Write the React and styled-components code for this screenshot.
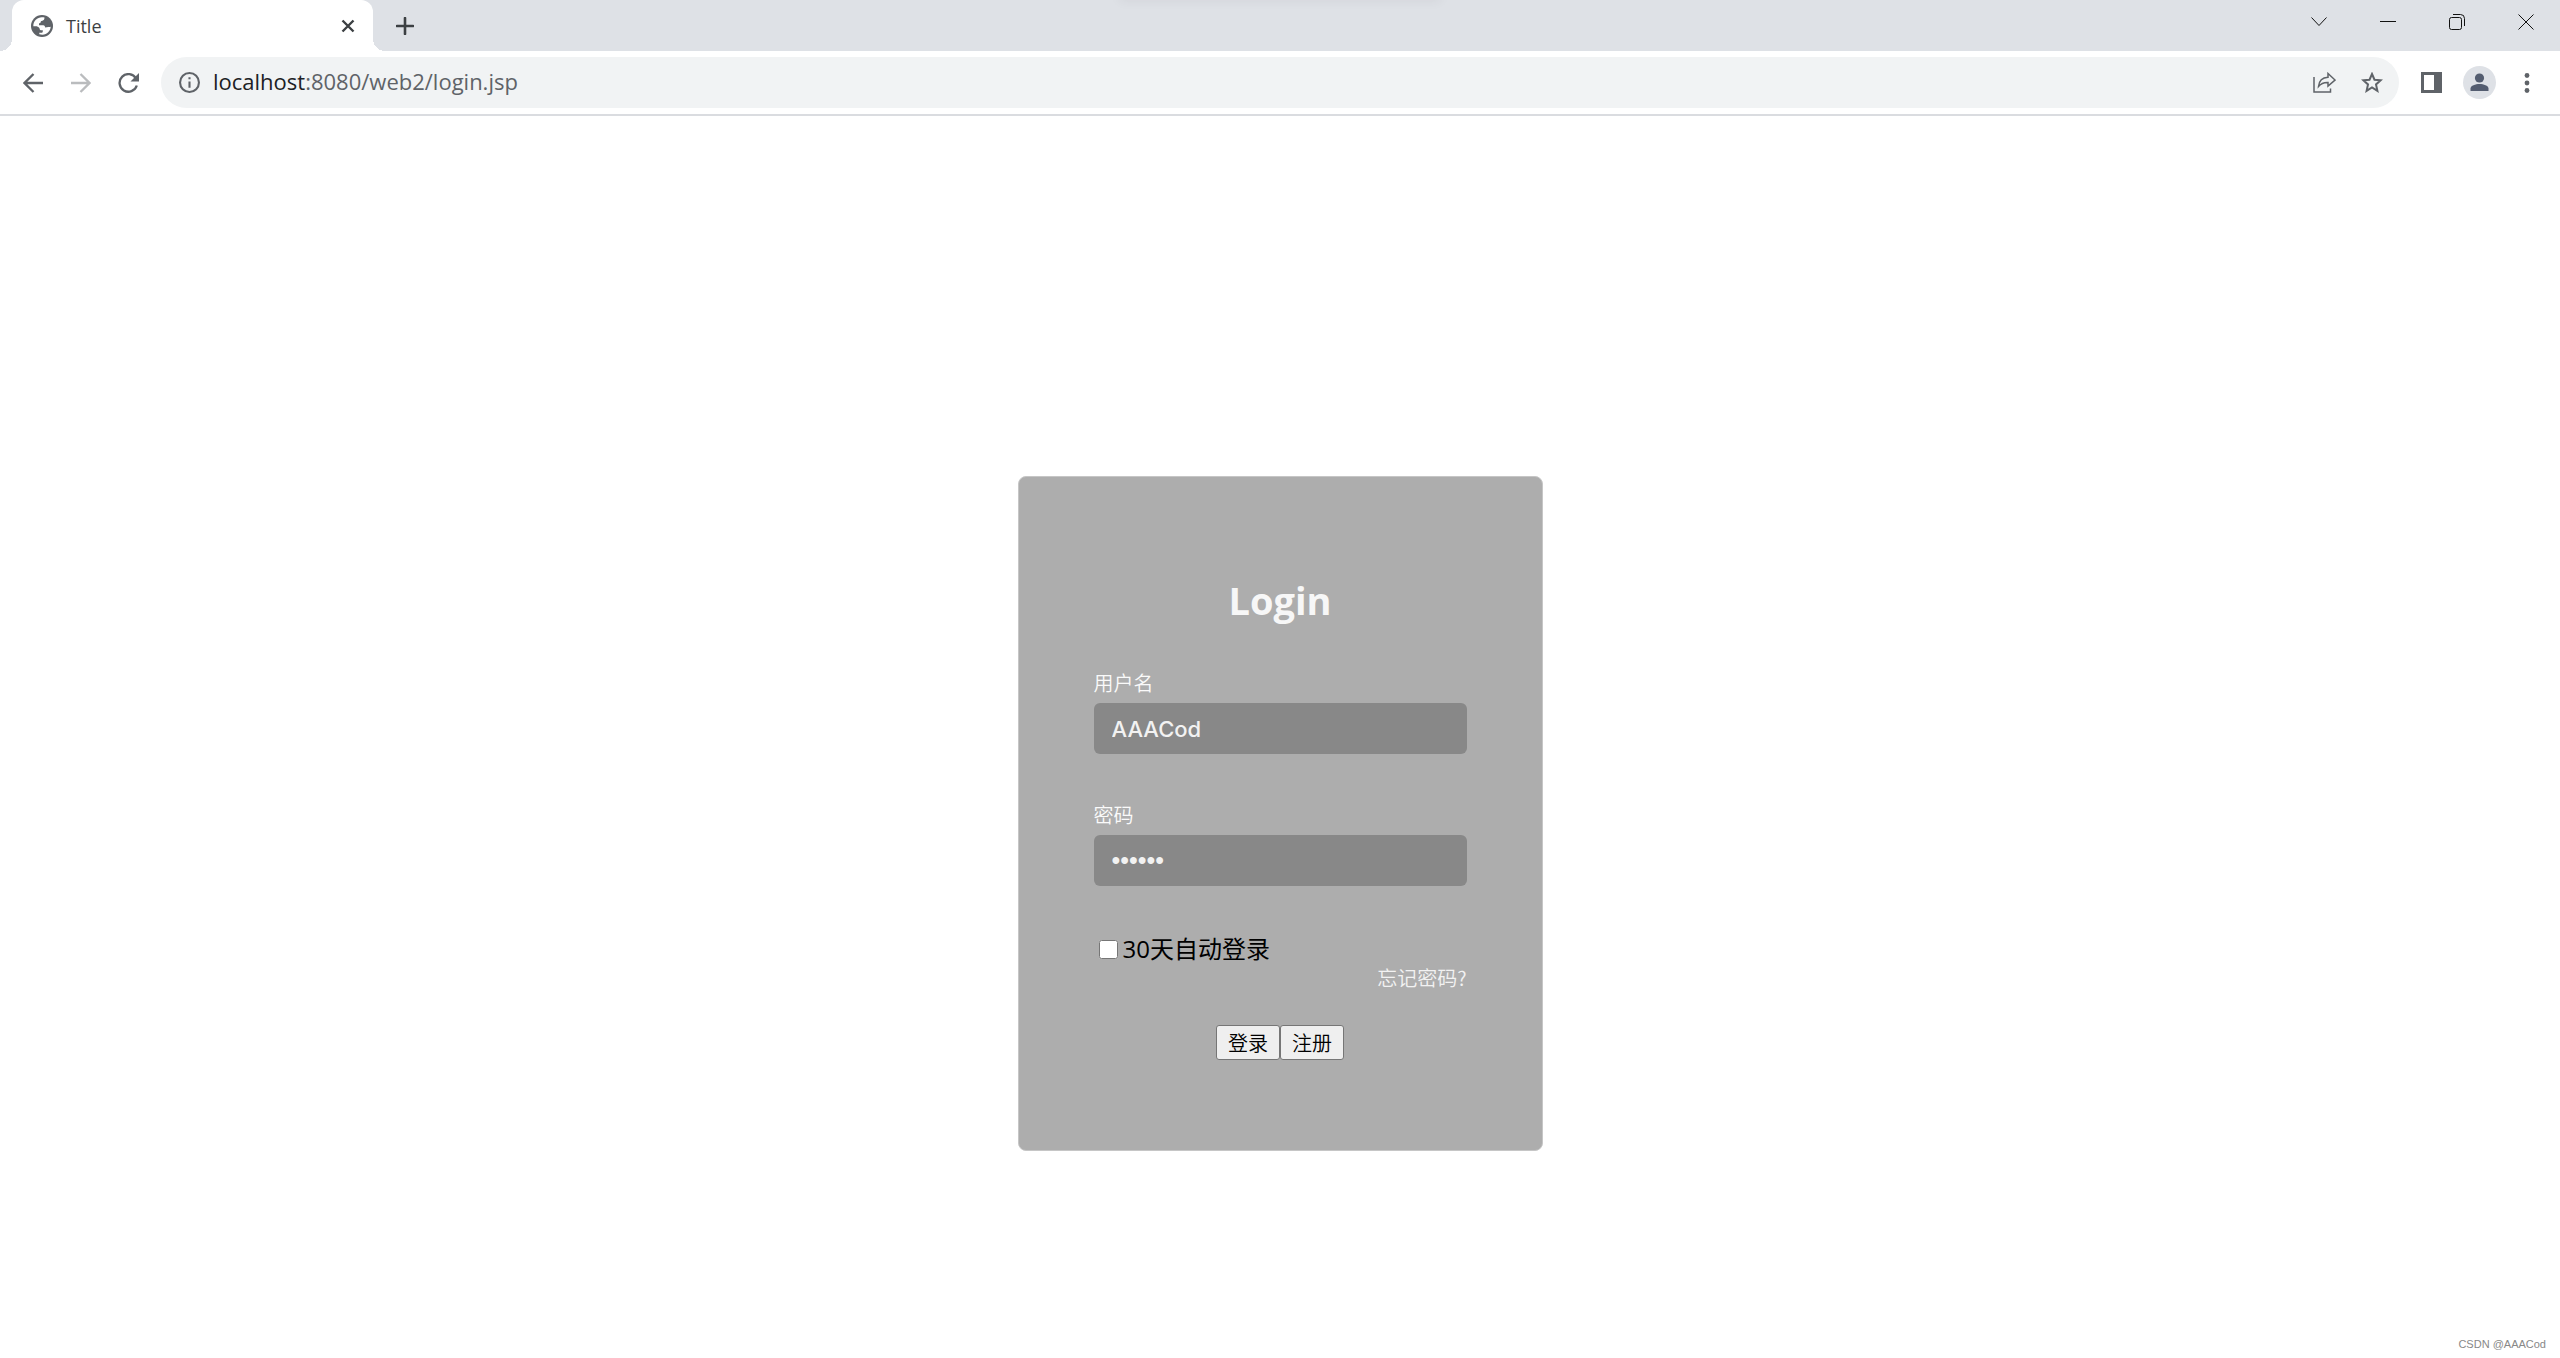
import { useState } from "react";
import styled, { createGlobalStyle } from "styled-components";

const App = () => {
  const [username, setUsername] = useState("AAACod");
  const [password, setPassword] = useState("123456");
  const [remember, setRemember] = useState(false);

  return (
    <Browser>
      <GlobalStyle />
      <TabStrip>
        <Tab>
          <svg width="22" height="22" viewBox="0 0 22 22">
            <circle cx="11" cy="11" r="11" fill="#5f6368" />
            <path
              d="M13.500 2.600C13.500 4.500 12.800 5.600 11.400 5.700C9.900 5.800 9.600 6.600 9.700 7.600L8 8.400V10.200H12.200C13.700 10.300 14 11.300 14.200 12.600C16.500 12.300 18.600 12 19.700 11.800C19.500 16 16 19.600 11.500 19.700C10.300 19.700 9.200 19.500 8.300 19.200V17.800H10.500C11.500 17.800 11.800 17 11.800 16V15.200H9.800C8.800 15 8.700 14.200 8.400 13C7.500 11.700 6.200 11.200 4.600 11.200H2.300C2.200 6 6.500 2.200 11 2.300C12 2.300 12.800 2.400 13.500 2.600Z"
              fill="#fff"
            />
          </svg>
          <TabTitle>Title</TabTitle>
          <IconButton aria-label="Close tab" $size={24}>
            <svg width="14" height="14" viewBox="0 0 14 14" fill="none" stroke="#3c4043" strokeWidth="2.400">
              <path d="M1.500 1.500L12.500 12.500M12.500 1.500L1.500 12.500" />
            </svg>
          </IconButton>
        </Tab>
        <IconButton aria-label="New tab" $size={36}>
          <svg width="18" height="18" viewBox="0 0 18 18" fill="none" stroke="#3c4043" strokeWidth="2.600" strokeLinecap="round">
            <path d="M9 1V17M1 9H17" />
          </svg>
        </IconButton>
        <TopShadow />
        <WindowButtons>
          <IconButton aria-label="Search tabs" $size={69}>
            <svg width="16" height="10" viewBox="0 0 16 10" fill="none" stroke="#111">
              <path d="M.5.5L8 8.500L15.500.5" />
            </svg>
          </IconButton>
          <IconButton aria-label="Minimize" $size={69}>
            <svg width="16" height="2" viewBox="0 0 16 2" fill="none" stroke="#111">
              <path d="M0 .5H16" />
            </svg>
          </IconButton>
          <IconButton aria-label="Restore" $size={69}>
            <svg width="16" height="16" viewBox="0 0 16 16" fill="none" stroke="#111">
              <rect x=".5" y="3.500" width="12" height="12" rx="2" />
              <path d="M4 .5H11.500Q15.500.5 15.500 4.500V12" />
            </svg>
          </IconButton>
          <IconButton aria-label="Close" $size={69}>
            <svg width="16" height="16" viewBox="0 0 16 16" fill="none" stroke="#111">
              <path d="M.5.5L15.500 15.500M15.500.5L.5 15.500" />
            </svg>
          </IconButton>
        </WindowButtons>
      </TabStrip>

      <Toolbar>
        <IconButton aria-label="Back" $size={48}>
          <svg width="20" height="20" viewBox="0 0 20 20" fill="none" stroke="#5f6368" strokeWidth="2.300">
            <path d="M20 10H1.500M10.500 1L1.500 10L10.500 19" />
          </svg>
        </IconButton>
        <IconButton aria-label="Forward" $size={48}>
          <svg width="20" height="20" viewBox="0 0 20 20" fill="none" stroke="#babcbe" strokeWidth="2.300">
            <path d="M0 10H18.500M9.500 1L18.500 10L9.500 19" />
          </svg>
        </IconButton>
        <IconButton aria-label="Reload" $size={48}>
          <svg width="22" height="20" viewBox="0 0 22 20" fill="none">
            <path d="M18 5.500A8.800 8.800 0 1 0 18.800 12.500" stroke="#5f6368" strokeWidth="2.300" />
            <path d="M21 0V8.500H12.500Z" fill="#5f6368" />
          </svg>
        </IconButton>
        <AddressBar>
          <svg width="21" height="21" viewBox="0 0 20 20" fill="none" stroke="#5f6368" strokeWidth="2">
            <circle cx="10" cy="10" r="9" />
            <path d="M10 9V15M10 5V7" />
          </svg>
          <Address>
            <strong>localhost</strong>:8080/web2/login.jsp
          </Address>
          <IconButton aria-label="Share this page" $size={48}>
            <svg width="23" height="21" viewBox="0 0 23 21" fill="none" stroke="#5f6368" strokeWidth="1.500">
              <path d="M1 5V20H17.500V16.500" />
              <path d="M5.500 14.500C6 9 9 5.500 15 5.200V1.500L22 8L15 14V10.500C11 10.300 8 11.500 5.500 14.500Z" />
            </svg>
          </IconButton>
          <IconButton aria-label="Bookmark this page" $size={48}>
            <svg width="22" height="21" viewBox="0 0 22 21" fill="none" stroke="#5f6368" strokeWidth="2">
              <path d="M11 2L13.500 7.700L19.700 8.300L15 12.400L16.400 18.900L11 15.500L5.600 18.900L7 12.400L2.300 8.300L8.500 7.700Z" />
            </svg>
          </IconButton>
        </AddressBar>
        <IconButton aria-label="Side panel" $size={48}>
          <svg width="21" height="21" viewBox="0 0 21 21">
            <path d="M0 0H21V21H0ZM3 3V18H13V3Z" fill="#5f6368" fillRule="evenodd" />
          </svg>
        </IconButton>
        <IconButton aria-label="Profile" $size={48}>
          <svg width="33" height="33" viewBox="0 0 33 33">
            <circle cx="16.500" cy="16.500" r="16.500" fill="#dee1e6" />
            <circle cx="16.500" cy="12" r="4.600" fill="#545d70" />
            <path d="M7.500 25V22.500C7.500 19.500 12.500 18 16.500 18S25.500 19.500 25.500 22.500V25Z" fill="#545d70" />
          </svg>
        </IconButton>
        <IconButton aria-label="Menu" $size={48}>
          <svg width="6" height="20" viewBox="0 0 6 20" fill="#5f6368">
            <circle cx="3" cy="2.500" r="2.400" />
            <circle cx="3" cy="10" r="2.400" />
            <circle cx="3" cy="17.500" r="2.400" />
          </svg>
        </IconButton>
      </Toolbar>

      <Page>
        <LoginForm onSubmit={(ev) => ev.preventDefault()}>
          <Heading>Login</Heading>
          <Field>
            <FieldLabel htmlFor="username">用户名</FieldLabel>
            <TextInput
              id="username"
              type="text"
              value={username}
              onChange={(ev) => setUsername(ev.target.value)}
            />
          </Field>
          <Field>
            <FieldLabel htmlFor="password">密码</FieldLabel>
            <PasswordInput
              id="password"
              type="password"
              value={password}
              onChange={(ev) => setPassword(ev.target.value)}
            />
          </Field>
          <Remember>
            <Checkbox
              type="checkbox"
              checked={remember}
              onChange={(ev) => setRemember(ev.target.checked)}
            />
            30天自动登录
          </Remember>
          <ForgotLink href="#forgot">忘记密码?</ForgotLink>
          <Actions>
            <FormButton type="submit">登录</FormButton>
            <FormButton type="button">注册</FormButton>
          </Actions>
        </LoginForm>
      </Page>
      <Watermark>CSDN @AAACod</Watermark>
    </Browser>
  );
};

const GlobalStyle = createGlobalStyle`
  * {
    box-sizing: border-box;
  }
  body {
    margin: 0;
    background: #fff;
    font-family: "Open Sans", "Noto Sans CJK SC", sans-serif;
  }
`;

const Browser = styled.div`
  display: flex;
  flex-direction: column;
  min-height: 100vh;
`;

const TabStrip = styled.div`
  display: flex;
  position: relative;
  align-items: center;
  height: 51px;
  padding-left: 12px;
  background: #dee1e6;
`;

const Tab = styled.div`
  display: flex;
  position: relative;
  align-items: center;
  width: 361px;
  height: 51px;
  margin-right: 14px;
  padding: 0 13px 0 19px;
  border-radius: 12px 12px 0 0;
  background: #fff;

  &::before,
  &::after {
    content: "";
    position: absolute;
    bottom: 0;
    width: 12px;
    height: 12px;
  }
  &::before {
    right: 100%;
    background: radial-gradient(circle at 0 0, transparent 12px, #fff 12px);
  }
  &::after {
    left: 100%;
    background: radial-gradient(circle at 100% 0, transparent 12px, #fff 12px);
  }
`;

const TabTitle = styled.span`
  flex: 1;
  margin-left: 13px;
  color: #3c4043;
  font-size: 18px;
`;

const TopShadow = styled.div`
  position: absolute;
  top: -10px;
  left: 50%;
  width: 320px;
  height: 10px;
  margin-left: -160px;
  box-shadow: 0 0 12px rgba(60, 50, 60, 0.08);
`;

const WindowButtons = styled.div`
  display: flex;
  align-self: flex-start;
  margin-left: auto;
`;

const IconButton = styled.button`
  display: flex;
  flex: none;
  align-items: center;
  justify-content: center;
  width: ${({ $size }) => $size}px;
  height: 44px;
  padding: 0;
  border: 0;
  background: none;
`;

const Toolbar = styled.div`
  display: flex;
  align-items: center;
  height: 65px;
  padding: 0 9px;
  border-bottom: 2px solid #dadce0;
  background: #fff;
`;

const AddressBar = styled.div`
  display: flex;
  flex: 1;
  align-items: center;
  height: 51px;
  margin: 0 8px;
  padding: 0 3px 0 18px;
  border-radius: 26px;
  background: #f1f3f4;
`;

const Address = styled.span`
  flex: 1;
  margin-left: 13px;
  padding-bottom: 3px;
  color: #5f6368;
  font-size: 22px;

  strong {
    color: #202124;
    font-weight: 400;
  }
`;

const Page = styled.main`
  display: flex;
  flex: 1;
  justify-content: center;
  align-items: flex-start;
  padding-top: 360px;
`;

const LoginForm = styled.form`
  display: flex;
  flex-direction: column;
  width: 525px;
  min-height: 675px;
  padding: 94px 75px 0;
  border: 1px solid #c6c6c6;
  border-radius: 8px;
  background: #adadad;
`;

const Heading = styled.h1`
  margin: 0 0 41px;
  color: #f7f7f7;
  font-size: 38px;
  font-weight: 700;
  line-height: 58px;
  text-align: center;
`;

const Field = styled.div`
  display: flex;
  flex-direction: column;
  margin-bottom: 48px;
`;

const FieldLabel = styled.label`
  color: #fafafa;
  font-family: "Noto Sans CJK SC", sans-serif;
  font-size: 20px;
  font-weight: 350;
  line-height: 26px;
  margin-bottom: 7px;
`;

const TextInput = styled.input`
  width: 100%;
  height: 51px;
  padding: 0 18px;
  border: 0;
  border-radius: 6px;
  outline: 0;
  background: #888;
  color: #f2f2f2;
  font-family: Inter, sans-serif;
  font-size: 22px;
  font-weight: 450;
`;

const PasswordInput = styled(TextInput)`
  font-family: "Liberation Sans", sans-serif;
  font-size: 25px;
  font-weight: 400;
`;

const Remember = styled.label`
  display: flex;
  align-items: center;
  color: #000;
  font-size: 24px;
  line-height: 30px;
`;

const Checkbox = styled.input`
  width: 19px;
  height: 19px;
  margin: 0 5px;
`;

const ForgotLink = styled.a`
  align-self: flex-end;
  color: #f2f2f2;
  font-family: "Noto Sans CJK SC", sans-serif;
  font-size: 20px;
  font-weight: 350;
  line-height: 28px;
  text-decoration: none;
`;

const Actions = styled.div`
  display: flex;
  justify-content: center;
  margin-top: 33px;
`;

const FormButton = styled.button`
  width: 64px;
  height: 35px;
  padding: 0;
  border: 1px solid #767676;
  border-radius: 3px;
  background: #efefef;
  color: #000;
  font-family: "Noto Sans CJK SC", sans-serif;
  font-size: 20px;
  font-weight: 350;
  line-height: 32px;
`;

const Watermark = styled.footer`
  align-self: flex-end;
  padding: 0 14px 6px;
  color: #888;
  font-family: "Liberation Sans", sans-serif;
  font-size: 11px;
  line-height: 16px;
`;

export default App;
